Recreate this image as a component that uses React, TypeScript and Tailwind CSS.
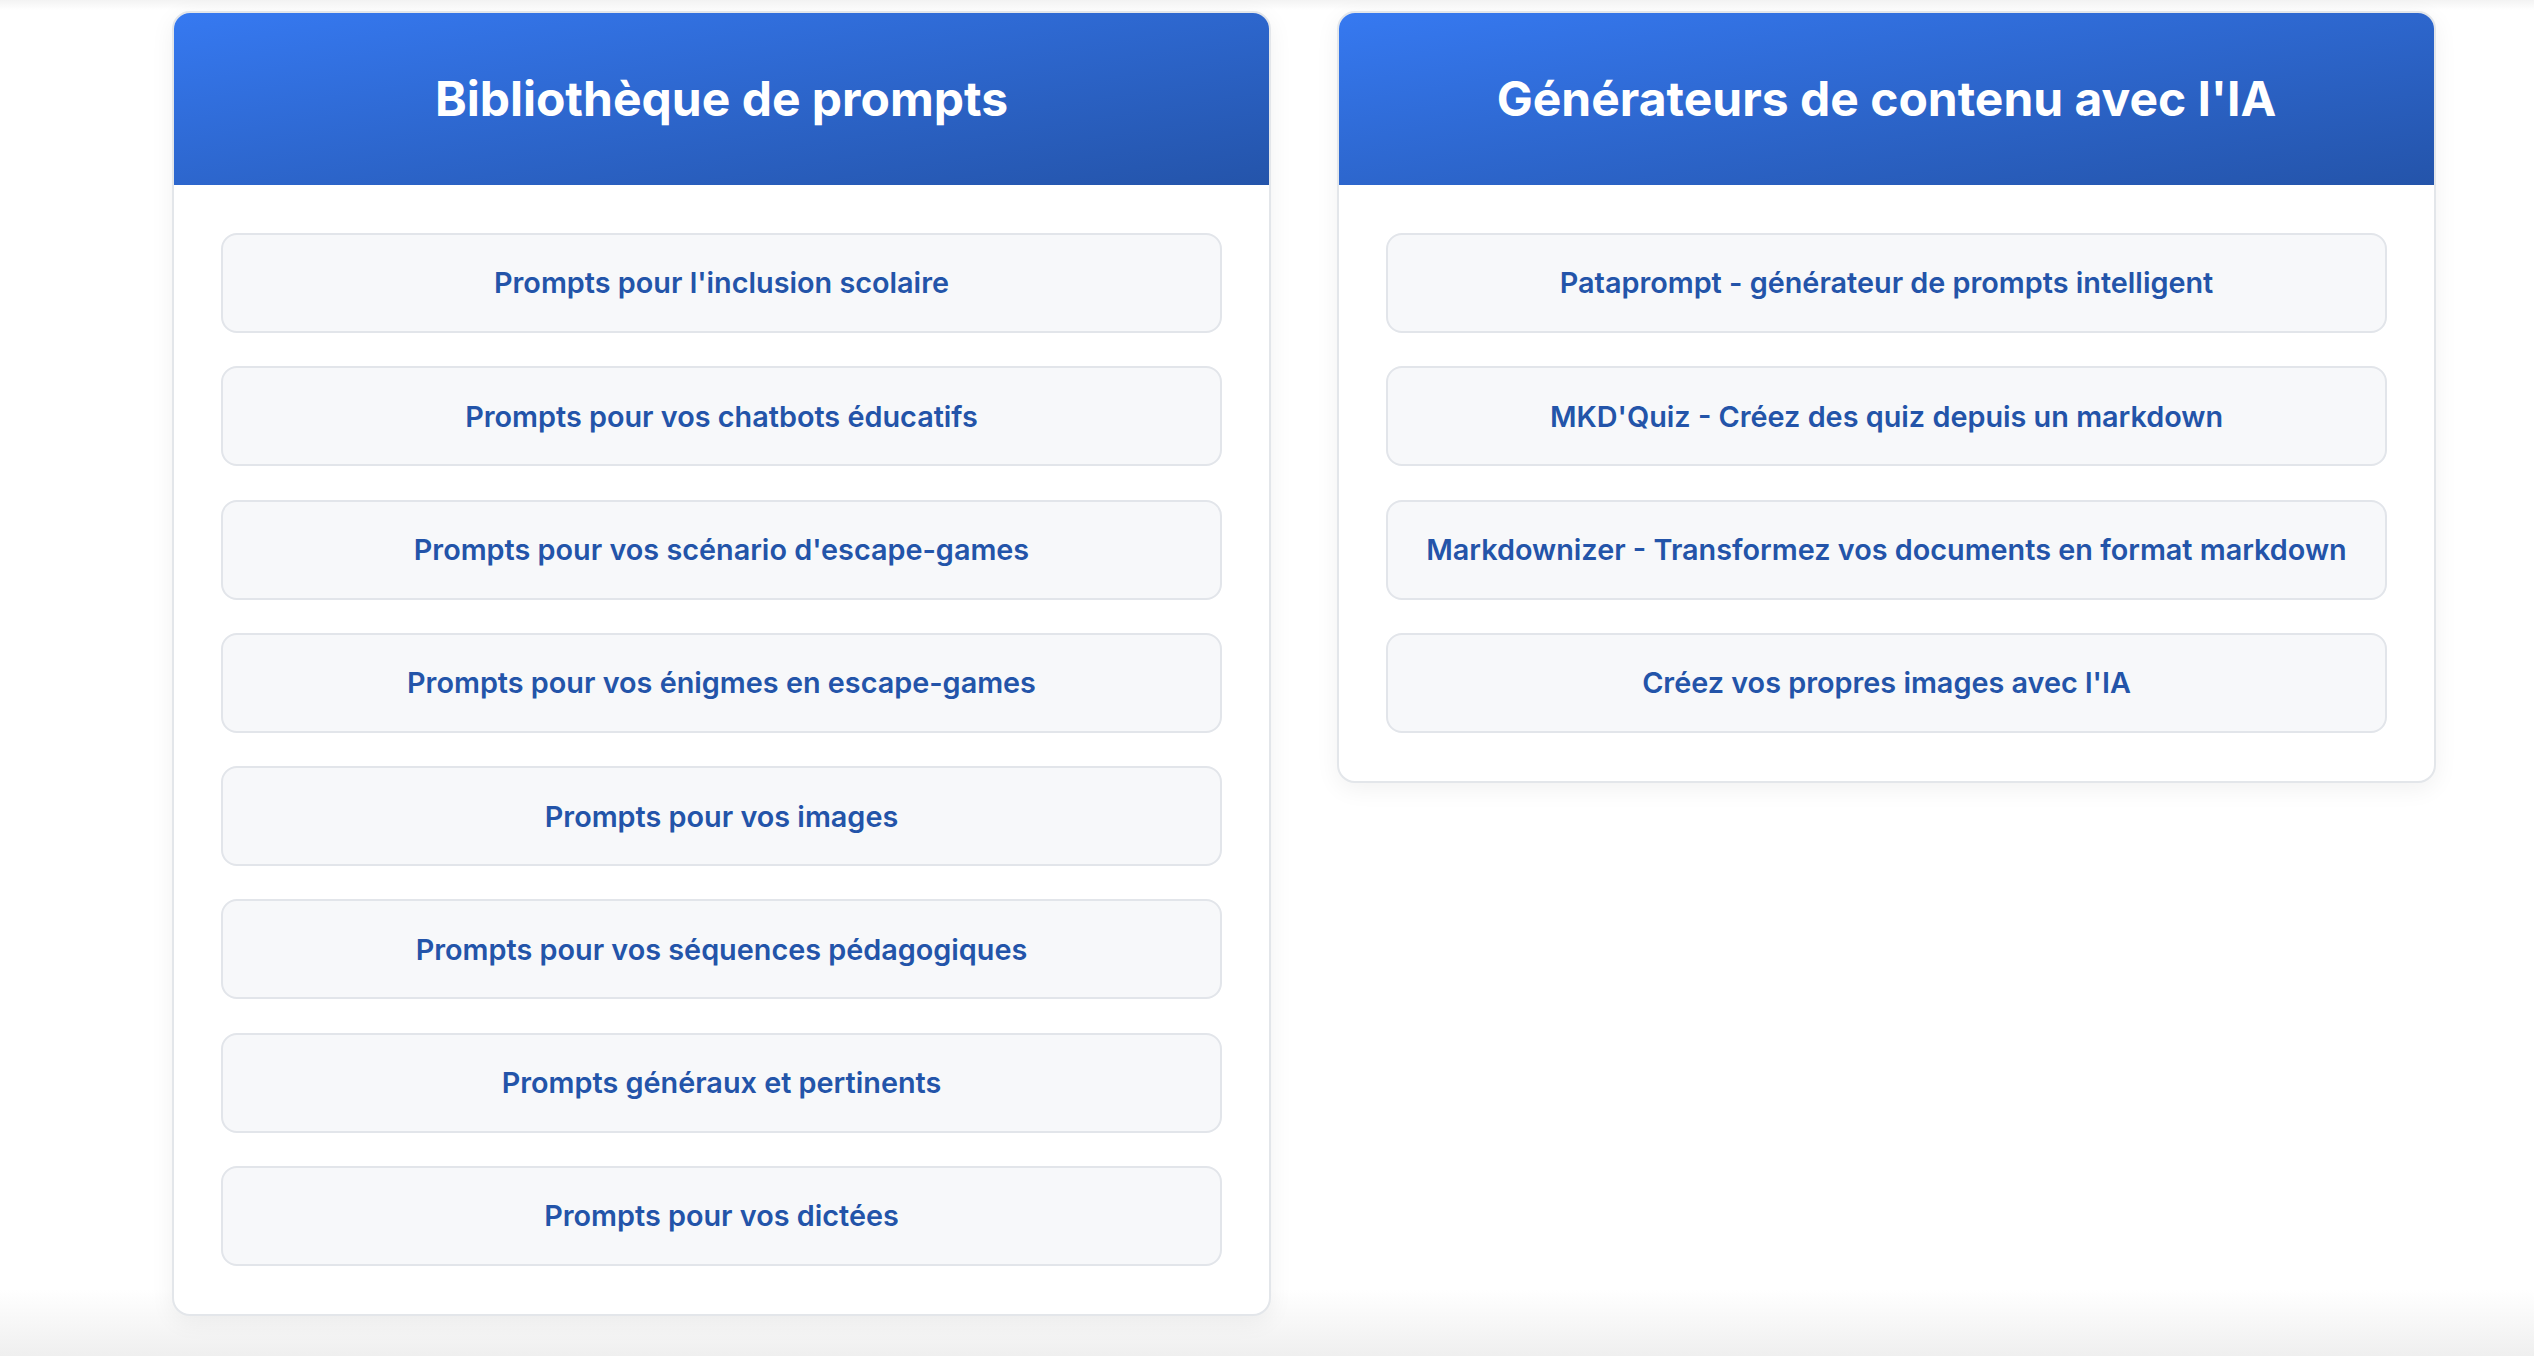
const library = [
  "Prompts pour l'inclusion scolaire",
  "Prompts pour vos chatbots éducatifs",
  "Prompts pour vos scénario d'escape-games",
  "Prompts pour vos énigmes en escape-games",
  "Prompts pour vos images",
  "Prompts pour vos séquences pédagogiques",
  "Prompts généraux et pertinents",
  "Prompts pour vos dictées",
];

const generators = [
  "Pataprompt - générateur de prompts intelligent",
  "MKD'Quiz - Créez des quiz depuis un markdown",
  "Markdownizer - Transformez vos documents en format markdown",
  "Créez vos propres images avec l'IA",
];

function Card({ title, items }: { title: string; items: string[] }) {
  return (
    <div className="w-[1099px] shrink-0 border-2 border-[#e3e6ea] rounded-[18px] overflow-hidden bg-white shadow-[0_6px_24px_rgba(0,0,0,0.06)]">
      <div className="h-[172px] flex items-center justify-center bg-linear-to-br from-[#3679f1] to-[#2454aa]">
        <h2 className="text-[48px] font-bold text-white leading-none">{title}</h2>
      </div>
      <div className="px-[47px] py-[48px] flex flex-col gap-[33.3px]">
        {items.map((item, index) => (
          <button
            key={index}
            className="h-[100px] w-full border-2 border-[#e2e5ea] bg-[#f7f8fa] rounded-[16px] text-[28.8px] font-semibold text-[#2354a9] flex items-center justify-center"
          >
            {item}
          </button>
        ))}
      </div>
    </div>
  );
}

export default function App() {
  return (
    <div className="h-screen overflow-hidden font-['Inter',sans-serif] bg-[linear-gradient(to_bottom,#f3f3f3_0px,#ffffff_10px,#ffffff_1290px,#efefef_1356px)]">
      <div className="flex items-start gap-[66px] pl-[172px] pt-[11px]">
        <Card title="Bibliothèque de prompts" items={library} />
        <Card title="Générateurs de contenu avec l'IA" items={generators} />
      </div>
    </div>
  );
}
